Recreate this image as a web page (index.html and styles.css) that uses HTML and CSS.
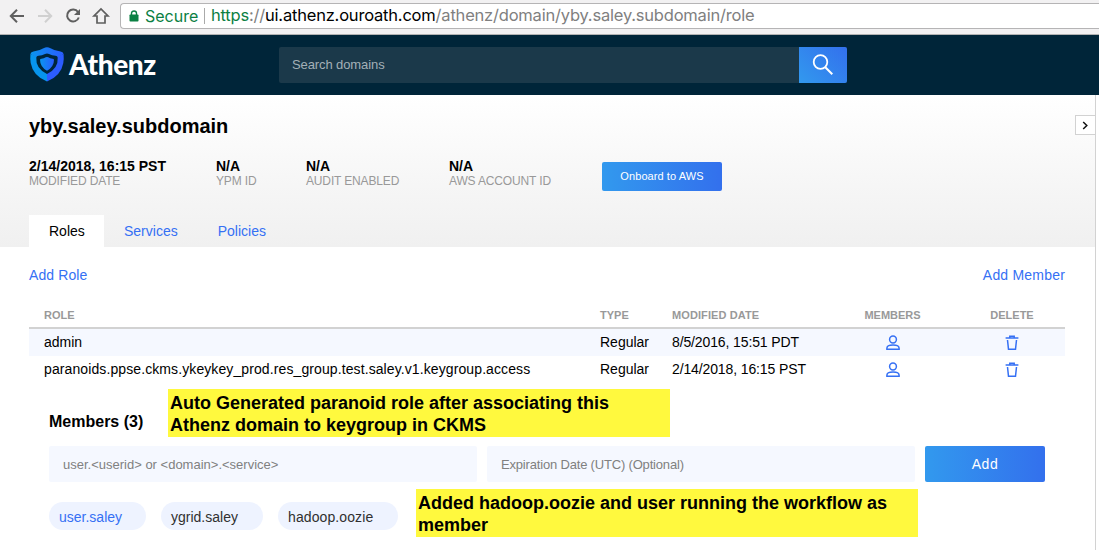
FILE: index.html
```html
<!DOCTYPE html>
<html lang="en">
<head>
<meta charset="utf-8">
<title>Athenz</title>
<link rel="stylesheet" href="styles.css">
</head>
<body>
<svg class="defs" width="0" height="0">
  <symbol id="user" viewBox="0 0 14 16">
    <circle cx="7" cy="4.5" r="3.400"/>
    <path d="M.9 14.300v-1.100c0-1.900 2.500-3.100 6.100-3.100s6.100 1.200 6.100 3.100v1.100z"/>
  </symbol>
  <symbol id="trash" viewBox="0 0 14 16">
    <path d="M.6 2.900h12.800M4.800 2.600V1.200h4.400v1.400M2.500 5l1 9.300h7l1-9.300"/>
  </symbol>
</svg>
<div class="browser">
  <svg class="nav" width="110" height="34" viewBox="0 0 110 34" fill="none">
    <g stroke="#5f5f5f" stroke-width="2">
      <path d="M24 16H11M17 9.800L10.800 16l6.200 6.200"/>
      <path stroke="#d0d0d0" d="M38 16h13M45 9.800l6.200 6.200-6.200 6.200"/>
      <path d="M78 12a6 6 0 1 0 .8 5.500"/>
      <path d="M94 16h3v7h8v-7h3l-7-7-7 7z" stroke-width="1.700"/>
    </g>
    <path fill="#5f5f5f" d="M80 9v6h-6z"/>
  </svg>
  <div class="address">
    <svg class="lock" width="10" height="12" viewBox="0 0 10 12"><rect x=".5" y="4.500" width="9" height="7" rx=".8" fill="#0b8043"/><path d="M2.500 5V3.200a2.500 2.200 0 0 1 5 0V5" fill="none" stroke="#0b8043" stroke-width="1.400"/></svg>
    <span class="secure">Secure</span>
    <span class="divider"></span>
    <span class="url"><span class="scheme">https</span>://<span class="host">ui.athenz.ouroath.com</span>/athenz/domain/yby.saley.subdomain/role</span>
  </div>
</div>
<header class="topbar">
  <svg class="shield" width="34" height="35" viewBox="0 0 34 35">
    <defs><linearGradient id="blue" x2="1" y2="0"><stop stop-color="#0a95ee"/><stop offset="1" stop-color="#2a5cff"/></linearGradient></defs>
    <path fill="#0795ed" d="M.4 7Q0 12 .7 16Q3 29 17 34.500V13z"/>
    <path fill="#2c5cff" d="M33.600 7q.4 5-.3 9Q31 29 17 34.500V13z"/>
    <path fill="url(#blue)" d="M.4 7Q1 5 3.500 4.600Q9 4 13.500 1.300Q17-.6 20.500 1.300Q25 4 30.500 4.600Q33 5 33.600 7L17 16z"/>
    <path fill="#00263a" d="M6.300 10.500Q6.500 9 8.500 8.800Q12 8.500 15 6.900Q17 6 19 6.900Q22 8.500 25.500 8.800Q27.500 9 27.700 10.500Q28.500 21.500 17 27Q5.500 21.500 6.300 10.500z"/>
    <path fill="url(#blue)" d="M10 12.800Q10.200 11.800 11.500 11.700Q14 11.400 15.700 10.300Q17 9.600 18.300 10.300Q20 11.400 22.500 11.700Q23.800 11.800 24 12.800Q24 19.800 17 23.800Q10 19.800 10 12.800z"/>
  </svg>
  <span class="brand">Athenz</span>
  <div class="search">
    <span class="search-text">Search domains</span>
    <span class="search-btn"><svg width="22" height="22" viewBox="0 0 22 22" fill="none" stroke="#fff"><circle cx="8.500" cy="8" r="6.800" stroke-width="1.800"/><path d="M13.300 13.200l7 7" stroke-width="2"/></svg></span>
  </div>
</header>
<div class="page">
  <section class="summary">
    <h1>yby.saley.subdomain</h1>
    <div class="stats">
      <div class="stat date"><b>2/14/2018, 16:15 PST</b><span>MODIFIED DATE</span></div>
      <div class="stat ypm"><b>N/A</b><span>YPM ID</span></div>
      <div class="stat audit"><b>N/A</b><span>AUDIT ENABLED</span></div>
      <div class="stat aws"><b>N/A</b><span>AWS ACCOUNT ID</span></div>
      <div class="onboard">Onboard to AWS</div>
    </div>
    <nav class="tabs"><a class="active">Roles</a><a>Services</a><a>Policies</a></nav>
    <span class="toggle"><svg width="7" height="9" viewBox="0 0 7 9" fill="none" stroke="#111" stroke-width="1.500"><path d="M1.200 1l3.600 3.500L1.200 8"/></svg></span>
  </section>
  <main>
    <div class="actions"><a class="add-role">Add Role</a><a class="add-member">Add Member</a></div>
    <div class="table">
      <div class="row head"><span>ROLE</span><span>TYPE</span><span class="modified">MODIFIED DATE</span><span class="mid">MEMBERS</span><span class="mid">DELETE</span></div>
      <div class="row shaded"><span>admin</span><span>Regular</span><span class="when">8/5/2016, 15:51 PDT</span><span class="mid"><svg class="icon"><use href="#user"/></svg></span><span class="mid"><svg class="icon"><use href="#trash"/></svg></span></div>
      <div class="row"><span class="long">paranoids.ppse.ckms.ykeykey_prod.res_group.test.saley.v1.keygroup.access</span><span>Regular</span><span class="when">2/14/2018, 16:15 PST</span><span class="mid"><svg class="icon"><use href="#user"/></svg></span><span class="mid"><svg class="icon"><use href="#trash"/></svg></span></div>
    </div>
    <section class="members">
      <h2>Members (3)</h2>
      <div class="form">
        <div class="input">user.&lt;userid&gt; or &lt;domain&gt;.&lt;service&gt;</div>
        <div class="input expiry">Expiration Date (UTC) (Optional)</div>
        <div class="add">Add</div>
      </div>
      <div class="chips"><span class="chip link">user.saley</span><span class="chip c2">ygrid.saley</span><span class="chip c3">hadoop.oozie</span></div>
    </section>
  </main>
</div>
<div class="note note-role">Auto Generated paranoid role after associating this<br>Athenz domain to keygroup in CKMS</div>
<div class="note note-member">Added hadoop.oozie and user running the workflow as<br>member</div>
</body>
</html>
```
FILE: styles.css
```css
* { box-sizing: border-box; }
body { margin: 0; width: 1099px; height: 550px; overflow: hidden; position: relative; background: #fff; color: #000; font: 14px/16px "Liberation Sans", Arial, sans-serif; white-space: nowrap; }
.defs { position: absolute; }
.browser { display: flex; height: 35px; background: #f2f1f2; border-bottom: 1px solid #b2b2b2; padding-top: 3px; }
.nav { flex: none; margin-top: -3px; margin-right: 10px; }
.address { flex: 1; height: 26px; display: flex; align-items: center; background: #fff; border: 1px solid #b5b4b5; border-right: 0; border-radius: 4px 0 0 4px; font-family: Inter, sans-serif; font-size: 16.500px; }
.lock { margin-left: 8px; flex: none; }
.secure { margin-left: 6px; width: 54px; color: #0b8043; font-size: 16px; }
.divider { width: 1px; height: 16px; background: #aaa; margin: 0 6px 0 5px; }
.url { color: #808080; margin-top: -2px; line-height: 20px; letter-spacing: -.2px; }
.scheme { color: #0b8043; }
.host { color: #000; }
.topbar { height: 60px; background: #002539; display: flex; align-items: center; padding-left: 30px; }
.shield { margin-top: -2px; flex: none; }
.brand { width: 210px; margin: -3px 0 0 5px; color: #fff; font: 900 28px/34px Lato, sans-serif; letter-spacing: -.35px; }
.search { display: flex; width: 568px; height: 36px; margin-top: -1px; background: #1b394a; border-radius: 2px; overflow: hidden; align-items: center; }
.search-text { flex: 1; padding: 1px 0 0 13px; color: #a3b0b7; font-size: 13px; letter-spacing: -.1px; }
.search-btn { width: 48px; height: 36px; display: flex; align-items: center; justify-content: center; background: linear-gradient(45deg, #3299ee, #3370ed); }
.page { width: 1096px; height: 455px; border-right: 1px solid #d2d2d2; }
.summary { position: relative; height: 152px; padding: 20px 0 0 29px; background: linear-gradient(#fff, #f0f0f0); }
h1 { margin: 0; font-size: 20px; line-height: 23px; }
.stats { display: flex; margin-top: 20px; height: 57px; }
.stat b, .stat span { display: block; }
.stat b { line-height: 16px; }
.stat span { font-size: 12px; line-height: 14px; color: #999; letter-spacing: -.15px; }
.date { width: 187px; }
.ypm { width: 90px; }
.audit { width: 143px; }
.aws { width: 153px; }
.onboard, .add { background: linear-gradient(90deg, #3299ee, #3370ed); color: #fff; border-radius: 2px; text-align: center; }
.onboard { width: 120px; height: 29px; margin-top: 4px; font-size: 11px; line-height: 29px; letter-spacing: .08px; }
.tabs { display: flex; height: 32px; line-height: 32px; }
.tabs a { color: #3570f4; padding: 0 19px 0 20px; }
.tabs a:last-child { padding-left: 21px; }
.tabs .active { background: #fff; color: #000; width: 75px; }
.toggle { position: absolute; right: 0; top: 20px; width: 20px; height: 20px; border: 1px solid #d2d2d2; border-right: 0; background: #fff; display: flex; align-items: center; justify-content: center; }
main { padding: 20px 30px 0 29px; }
.actions { display: flex; justify-content: space-between; color: #3570f4; }
.add-role { letter-spacing: .1px; }
.add-member { letter-spacing: .2px; }
.table { margin-top: 20px; }
.row { display: grid; grid-template-columns: 556px 72px 161px 119px 120px; padding-left: 15px; height: 27px; line-height: 26px; }
.head { height: 26px; line-height: 25px; border-bottom: 2px solid #d2d2d2; color: #999; font-size: 11px; font-weight: bold; }
.modified { letter-spacing: .1px; }
.shaded { background: #f5f8ff; }
.mid { text-align: center; }
.icon { display: block; width: 14px; height: 16px; margin: 6px auto 0; fill: none; stroke: #3570f4; stroke-width: 1.500; }
.long { letter-spacing: .1px; }
.when { letter-spacing: -.12px; }
.members { padding-left: 20px; margin-top: 30px; }
h2 { margin: 0; font-size: 16px; line-height: 18px; }
.form { display: flex; gap: 10px; margin-top: 15px; height: 36px; line-height: 36px; }
.input { width: 428px; padding: 1px 0 0 14px; background: #f5f8ff; color: #808080; font-size: 13px; border-radius: 2px; }
.expiry { letter-spacing: -.18px; }
.add { width: 120px; letter-spacing: .6px; }
.chips { display: flex; gap: 15px; margin-top: 20px; }
.chip { width: 97px; height: 28px; padding-left: 10px; line-height: 30px; border-radius: 14px; background: #eef3ff; color: #303030; }
.link { color: #3570f4; }
.c2 { width: 102px; }
.c3 { width: 120px; letter-spacing: .1px; }
.note { position: absolute; width: 502px; height: 48px; padding: 3px 2px; background: #fff93e; font-size: 18px; font-weight: bold; line-height: 22px; }
.note-role { left: 168px; top: 389px; }
.note-member { left: 416px; top: 489px; }
```
